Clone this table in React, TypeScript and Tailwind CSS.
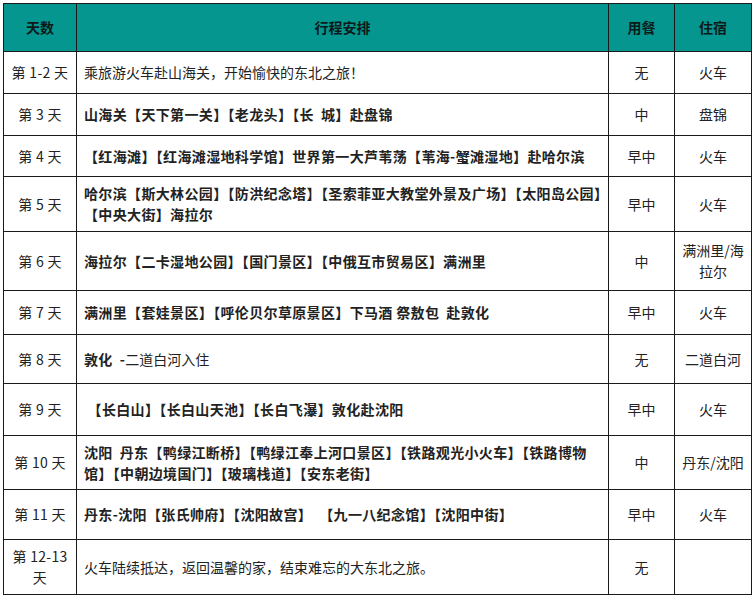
import React from "react";

type Row = {
  day: React.ReactNode;
  plan: React.ReactNode;
  meal: string;
  stay: string;
  h: string;
};

const B = ({ children }: { children: React.ReactNode }) => (
  <span className="font-bold tracking-[0.35px]">{children}</span>
);

const rows: Row[] = [
  { day: "第 1-2 天", plan: <span className="font-normal">乘旅游火车赴山海关，开始愉快的东北之旅！</span>, meal: "无", stay: "火车", h: "h-[42px]" },
  { day: "第 3 天", plan: <B>山海关【天下第一关】【老龙头】【长&nbsp;&nbsp;城】赴盘锦</B>, meal: "中", stay: "盘锦", h: "h-[42px]" },
  { day: "第 4 天", plan: <B>【红海滩】【红海滩湿地科学馆】世界第一大芦苇荡【苇海-蟹滩湿地】赴哈尔滨</B>, meal: "早中", stay: "火车", h: "h-[41px]" },
  { day: "第 5 天", plan: <B>哈尔滨【斯大林公园】【防洪纪念塔】【圣索菲亚大教堂外景及广场】【太阳岛公园】【中央大街】海拉尔</B>, meal: "早中", stay: "火车", h: "h-[55px]" },
  { day: "第 6 天", plan: <B>海拉尔【二卡湿地公园】【国门景区】【中俄互市贸易区】满洲里</B>, meal: "中", stay: "满洲里/海拉尔", h: "h-[59px]" },
  { day: "第 7 天", plan: <B>满洲里【套娃景区】【呼伦贝尔草原景区】下马酒&nbsp;祭敖包&nbsp;&nbsp;赴敦化</B>, meal: "早中", stay: "火车", h: "h-[44px]" },
  { day: "第 8 天", plan: <span><B>敦化&nbsp;&nbsp;-</B>二道白河入住</span>, meal: "无", stay: "二道白河", h: "h-[49px]" },
  { day: "第 9 天", plan: <B>&nbsp;【长白山】【长白山天池】【长白飞瀑】敦化赴沈阳</B>, meal: "早中", stay: "火车", h: "h-[52px]" },
  { day: "第 10 天", plan: <B>沈阳&nbsp;&nbsp;丹东【鸭绿江断桥】【鸭绿江奉上河口景区】【铁路观光小火车】【铁路博物馆】【中朝边境国门】【玻璃栈道】【安东老街】</B>, meal: "中", stay: "丹东/沈阳", h: "h-[54px]" },
  { day: "第 11 天", plan: <B>丹东-沈阳【张氏帅府】【沈阳故宫】&nbsp;&nbsp;【九一八纪念馆】【沈阳中街】</B>, meal: "早中", stay: "火车", h: "h-[50px]" },
  { day: "第 12-13 天", plan: <span className="font-normal">火车陆续抵达，返回温馨的家，结束难忘的大东北之旅。</span>, meal: "无", stay: "", h: "h-[55px]" },
];

export default function App() {
  return (
    <div
      className="w-[754px] h-[598px] bg-white overflow-hidden pl-[3px] pt-[3px]"
      style={{ fontFamily: '"Noto Sans CJK SC", "Noto Sans", sans-serif' }}
    >
      <table className="w-[748px] table-fixed border-collapse text-[14px] leading-[21px] text-[#222]">
        <colgroup>
          <col className="w-[73px]" />
          <col className="w-[532px]" />
          <col className="w-[66px]" />
          <col className="w-[77px]" />
        </colgroup>
        <thead>
          <tr className="h-[48px] bg-[#04968f] text-[#0c1a1a] font-bold">
            <th className="border border-[#1a1a1a] text-center font-bold">天数</th>
            <th className="border border-[#1a1a1a] text-center font-bold">行程安排</th>
            <th className="border border-[#1a1a1a] text-center font-bold">用餐</th>
            <th className="border border-[#1a1a1a] text-center font-bold">住宿</th>
          </tr>
        </thead>
        <tbody>
          {rows.map((r, i) => (
            <tr key={i} className={r.h}>
              <td className="border border-[#1a1a1a] text-center px-[4px] align-middle tracking-[0.3px]">{r.day}</td>
              <td className="border border-[#1a1a1a] text-left pl-[7px] pr-[4px] align-middle">{r.plan}</td>
              <td className="border border-[#1a1a1a] text-center align-middle">{r.meal}</td>
              <td className="border border-[#1a1a1a] text-center px-[5px] align-middle">{r.stay}</td>
            </tr>
          ))}
        </tbody>
      </table>
    </div>
  );
}
